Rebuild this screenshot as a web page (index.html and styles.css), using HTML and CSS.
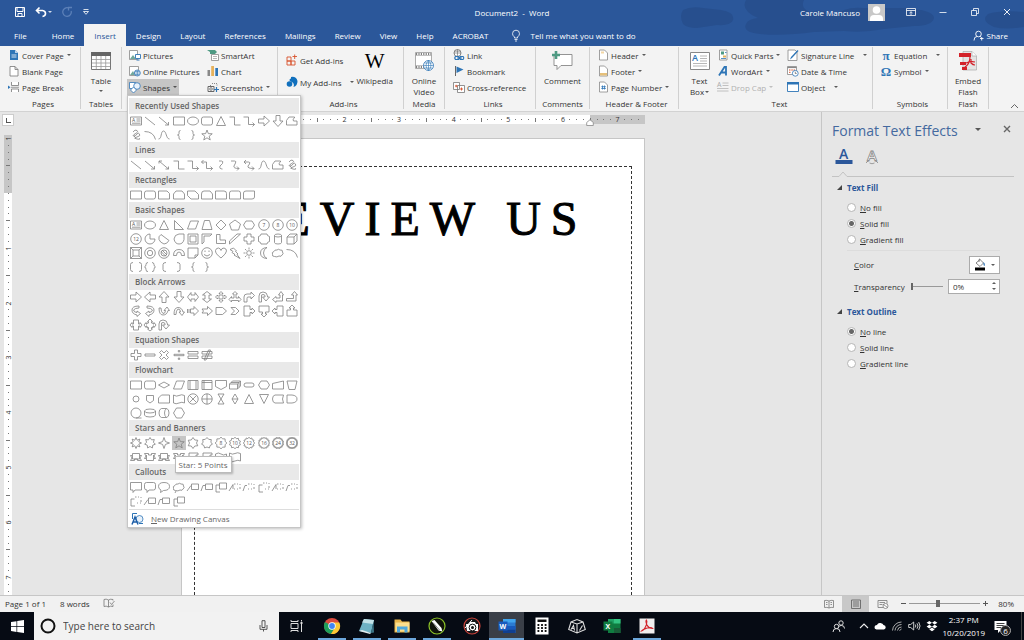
FILE: index.html
```html
<!DOCTYPE html>
<html lang="en">
<head>
    <meta charset="UTF-8">
    <meta name="viewport" content="width=device-width, initial-scale=1.0">
    <title>Document2 - Word</title>
    <link rel="stylesheet" href="styles.css">
</head>
<body>
    <header class="top">
        <svg class="clouds" width="344" height="45" viewBox="0 0 344 45">
            <path d="M3 10q8-4 20-2l18 2q14 2 12 10-2 6-16 5l-20 3q-10 0-14-4-4-8 0-14zM66 0h58q-4 8 6 12 14-4 26 4 8-10 28-8l40 0q30 2 30 10-2 8-20 8l-30 3q-20 4-40 2l-30 1q-30 4-54 2-18-2-14-10 2-5 12-6-18-8-12-18zM308 14q12-4 36-2v15q-18 3-30 0-14-6-6-13z"/>
        </svg>
        <div class="titlebar">
            <div class="quick">
                <button aria-label="Save"><svg width="12" height="12" viewBox="0 0 12 12"><path d="M1.5 1.5h9v9h-9zM3 1.5v4h6v-4M4 10.500v-3h4v3" fill="none" stroke="#fff"/></svg></button>
                <button class="undo" aria-label="Undo"><svg width="12" height="12" viewBox="0 0 12 12"><path d="M4.500 1.500L1.500 4.500l3 3M2 4.500h5.500q3 .5 3 3t-3 3" fill="none" stroke="#fff" stroke-width="1.600"/></svg><i class="caret"></i></button>
                <button aria-label="Redo"><svg width="12" height="12" viewBox="0 0 12 12"><path d="M7.500 2A4.300 4.300 0 1 0 10.200 5M7.500 4.500V1.500h3.500" fill="none" stroke="#5c80b8" stroke-width="1.300"/></svg></button>
                <button aria-label="Customize"><svg width="8" height="8" viewBox="0 0 8 8"><path d="M1.500 1.500h5M1.500 3.500h5L4 6.300z" fill="none" stroke="#fff" stroke-width=".8"/></svg></button>
            </div>
            <span class="doc-title">Document2&nbsp; -&nbsp; Word</span>
            <div class="account">
                <span>Carole Mancuso</span>
                <svg class="avatar" width="17" height="17" viewBox="0 0 17 17"><path fill="#c8c8c8" d="M0 0h17v17H0z"/><circle cx="8.500" cy="6" r="3.800" fill="#fff"/><path d="M2 17v-2q0-4 4-4h5q4 0 4 4v2z" fill="#fff"/></svg>
                <button aria-label="Ribbon display"><svg width="12" height="10" viewBox="0 0 12 10"><path d="M1.500 1.500h9v7h-9zM1.500 3.500h9M6 8V5M4.500 6L6 4.700 7.500 6" fill="none" stroke="#fff" stroke-width=".8"/></svg></button>
                <button aria-label="Minimize"><svg width="12" height="10" viewBox="0 0 12 10"><path d="M2.500 5.500h7" stroke="#fff" stroke-width=".8"/></svg></button>
                <button aria-label="Restore"><svg width="12" height="10" viewBox="0 0 12 10"><path d="M2.500 3.500h5v5h-5zM4.500 3.500v-2h5v5h-2" fill="none" stroke="#fff" stroke-width=".8"/></svg></button>
                <button aria-label="Close"><svg width="12" height="10" viewBox="0 0 12 10"><path d="M3 2l6 6M9 2L3 8" stroke="#fff" stroke-width=".9"/></svg></button>
            </div>
        </div>
        <nav class="tabs">
            <button class="tab file">File</button>
            <button class="tab">Home</button>
            <button class="tab active">Insert</button>
            <button class="tab">Design</button>
            <button class="tab">Layout</button>
            <button class="tab">References</button>
            <button class="tab">Mailings</button>
            <button class="tab">Review</button>
            <button class="tab">View</button>
            <button class="tab">Help</button>
            <button class="tab">ACROBAT</button>
            <button class="tell"><svg width="10" height="13" viewBox="0 0 10 13"><path d="M3.500 9V8Q1.500 6.500 1.500 4.700a3.500 3.500 0 0 1 7 0Q8.500 6.500 6.500 8v1zM3.500 10.500h3M4 12h2" fill="none" stroke="#fff" stroke-width=".8"/></svg>Tell me what you want to do</button>
            <button class="share"><svg width="11" height="11" viewBox="0 0 11 11"><circle cx="5.500" cy="4" r="2.800" fill="none" stroke="#fff" stroke-width=".9"/><path d="M1 10.500q0-4 3-4M7 8.500h3.500M8.700 7v3.500M7 6.400l1 .6" fill="none" stroke="#fff" stroke-width=".9"/></svg>Share</button>
        </nav>
    </header>

    <section class="ribbon">
        <div class="group pages">
            <div class="cmds">
                <div class="col">
                    <button class="cmd"><svg viewBox="0 0 12 12"><path d="M2 1h5l3 3v7H2z" fill="#2e75b6"/><path d="M7 1v3h3" fill="#b8d0e8"/><path d="M3.500 6h5M3.500 8h5" stroke="#fff" stroke-width=".8"/></svg>Cover Page<i class="caret"></i></button>
                    <button class="cmd"><svg viewBox="0 0 12 12"><path d="M2 1.500h5l3 3v6.500H2zM7 1.500v3h3" fill="#fff" stroke="#777" stroke-width=".8"/></svg>Blank Page</button>
                    <button class="cmd"><svg viewBox="0 0 12 12"><path d="M3.500 1v3.500h7V1M3.500 11V8h7v3" fill="#fff" stroke="#777" stroke-width=".8"/><path d="M3 6.300h8" stroke="#777" stroke-width=".7"/><path d="M0 4.500l2.500 1.800L0 8z" fill="#2e75b6"/></svg>Page Break</button>
                </div>
            </div>
            <div class="group-name">Pages</div>
        </div>
        <div class="group tables">
            <div class="cmds center">
                <button class="big"><svg viewBox="0 0 20 20"><path d="M.5 1.500h19v17H.5z" fill="#fff" stroke="#777"/><path d="M0 1h20v4H0z" fill="#666"/><path d="M1 8.500h18M1 12h18M1 15.500h18M5.300 5v13M10 5v13M14.700 5v13" stroke="#999" stroke-width=".8"/></svg>Table<span class="line2"><i class="caret"></i></span></button>
            </div>
            <div class="group-name">Tables</div>
        </div>
        <div class="group illustrations">
            <div class="cmds">
                <div class="col col-pictures">
                    <button class="cmd"><svg viewBox="0 0 12 12"><path d="M.5 1.500h8v9h-8z" fill="#fff" stroke="#888" stroke-width=".8"/><path d="M1 10l3-4 3 4z" fill="#70a89c"/><path d="M6.500 5.500h5v4h-5z" fill="#fff" stroke="#2e75b6" stroke-width=".9"/><path d="M7.500 11h3" stroke="#2e75b6"/></svg>Pictures</button>
                    <button class="cmd"><svg viewBox="0 0 12 12"><path d="M.5 1.500h9v9h-9z" fill="#fff" stroke="#888" stroke-width=".8"/><path d="M1 10l3-4 2 4z" fill="#70a89c"/><circle cx="8.300" cy="8" r="3" fill="#fff" stroke="#2e75b6" stroke-width=".8"/><path d="M5.300 8h6M8.300 5v6M6 6.500h4.500M6 9.500h4.500" stroke="#2e75b6" stroke-width=".6"/></svg>Online Pictures</button>
                    <div class="anchor">
                        <button class="cmd pressed"><svg viewBox="0 0 12 12"><path d="M.5 1.500h6v6h-6z" fill="#fff" stroke="#2e75b6" stroke-width=".8"/><circle cx="8" cy="5" r="3.300" fill="#e8f1fa" stroke="#2e75b6" stroke-width=".8"/><path d="M4.500 6l3 3-3 3-3-3z" fill="#fff" stroke="#2e75b6" stroke-width=".8"/></svg>Shapes<i class="caret"></i></button>
                        <div class="menu">
                            <div id="gallery"></div>
                            <button class="canvas-item"><svg width="13" height="13" viewBox="0 0 13 13"><path d="M1.500 7V1.500H6M4 5.500h6" fill="none" stroke="#2e75b6"/><circle cx="8.500" cy="7" r="3.500" fill="#e8f1fa" stroke="#2e75b6" stroke-width=".8"/><path d="M1 12.500L4 5l3 7.500M2.200 10h3.800" fill="none" stroke="#1f5fa8" stroke-width="1.500"/><path d="M8 11.500h4" stroke="#2e75b6"/></svg><span><u>N</u>ew Drawing Canvas</span></button>
                        </div>
                    </div>
                </div>
                <div class="col">
                    <button class="cmd"><svg viewBox="0 0 12 12"><path d="M0 1h8l2 2-2 2H3V3z" fill="#4e9a83"/><path d="M4.500 5.500h7v6h-7z" fill="#fff" stroke="#888" stroke-width=".8"/><path d="M6 7.500h4M6 9.500h4" stroke="#888" stroke-width=".6"/></svg>SmartArt</button>
                    <button class="cmd"><svg viewBox="0 0 12 12"><path d="M.5 5H3v6H.5z" fill="#888"/><path d="M4.200 1h2.800v10H4.200z" fill="#e6b25c"/><path d="M8.300 3H11v8H8.300z" fill="#2e75b6"/></svg>Chart</button>
                    <button class="cmd"><svg viewBox="0 0 12 12"><path d="M1 5.500h6v5H1z" fill="none" stroke="#666"/><circle cx="4" cy="8" r="1.300" fill="none" stroke="#666" stroke-width=".8"/><path d="M3 4.500h2M5 2.500h5v2" stroke="#888" fill="none" stroke-dasharray="1 1"/><path d="M9.500 6v5M7 8.500h5" stroke="#2e75b6" stroke-width="1.200"/></svg>Screenshot<i class="caret"></i></button>
                </div>
            </div>
        </div>
        <div class="group addins">
            <div class="cmds">
                <div class="col col-addins">
                    <button class="cmd"><svg viewBox="0 0 12 12"><path d="M1 3h4v4H1zM1 7h4v4H1zM5 7h4v4H5zM6.500 2.500H11M8.700.5v4.500" fill="none" stroke="#d8512a" stroke-width=".9"/></svg>Get Add-ins</button>
                    <button class="cmd"><svg viewBox="0 0 12 12"><path d="M5 1q5-1 6.500 4 0 5-4 6Q9 7 5 5.500z" fill="#1170bd"/><circle cx="3.500" cy="8" r="2.800" fill="#1170bd"/><circle cx="5" cy="4" r="1.500" fill="#1170bd"/></svg>My Add-ins<i class="caret wide"></i></button>
                </div>
                <button class="big"><span class="wiki">W</span>Wikipedia</button>
            </div>
            <div class="group-name">Add-ins</div>
        </div>
        <div class="group media">
            <div class="cmds center">
                <button class="big"><svg viewBox="0 0 20 20"><path d="M1.500 1.500h16v16h-16z" fill="#fff" stroke="#999" stroke-width=".8"/><path d="M2 3h15M2 16h8" stroke="#555" stroke-width="1.500" stroke-dasharray="1.200 1.200"/><path d="M1.500 4.500h16M1.500 14.500h9" stroke="#999" stroke-width=".6"/><circle cx="14.500" cy="14.500" r="5" fill="#fff" stroke="#2e75b6" stroke-width=".8"/><path d="M9.500 14.500h10M14.500 9.500v10M10.500 12h8M10.500 17h8M14.500 9.500q-5 5 0 10 5-5 0-10" fill="none" stroke="#2e75b6" stroke-width=".6"/></svg>Online<span class="line2">Video</span></button>
            </div>
            <div class="group-name">Media</div>
        </div>
        <div class="group links">
            <div class="cmds">
                <div class="col">
                    <button class="cmd"><svg viewBox="0 0 12 12"><circle cx="4.500" cy="4" r="3.500" fill="#fff" stroke="#666" stroke-width=".8"/><path d="M1 4h7M4.500.5v7M1.700 2.200h5.600" stroke="#666" stroke-width=".6"/><path d="M2.500 7.500h3q1.500 1.500 0 3h-3q-1.500-1.500 0-3zM7.500 7.500h2.500q1.500 1.500 0 3H7.500q-1.500-1.500 0-3zM4 9h5" fill="none" stroke="#2e75b6" stroke-width="1.100"/></svg>Link</button>
                    <button class="cmd"><svg viewBox="0 0 12 12"><path d="M2.500 1v10" stroke="#666"/><path d="M3.500 1.500l7 3-7 3.500z" fill="#2e75b6"/></svg>Bookmark</button>
                    <button class="cmd"><svg viewBox="0 0 12 12"><path d="M.5 1.500h6v7h-6zM4.500 4.500h7v7h-7z" fill="#fff" stroke="#777" stroke-width=".8"/><path d="M2 5h2.500M3.200 3.800v2.500M7 8h3M8.500 6.500v3" stroke="#d8512a" stroke-width=".9"/></svg>Cross-reference</button>
                </div>
            </div>
            <div class="group-name">Links</div>
        </div>
        <div class="group comments">
            <div class="cmds center">
                <button class="big"><svg viewBox="0 0 20 20"><path d="M2 3.500h18v11h-11l-4 4v-4H2z" fill="#fff" stroke="#888" stroke-width=".9"/><path d="M4 0v8M0 4h8" stroke="#4e9a83" stroke-width="2.600"/></svg>Comment</button>
            </div>
            <div class="group-name">Comments</div>
        </div>
        <div class="group headfoot">
            <div class="cmds">
                <div class="col">
                    <button class="cmd"><svg viewBox="0 0 12 12"><path d="M2.500 1h5l3 3v7h-8z" fill="#fff" stroke="#888" stroke-width=".8"/><path d="M4 2.500h3v2H4z" fill="#f3d7a5"/></svg>Header<i class="caret"></i></button>
                    <button class="cmd"><svg viewBox="0 0 12 12"><path d="M2.500 1h5l3 3v7h-8z" fill="#fff" stroke="#888" stroke-width=".8"/><path d="M3 8h7v2.500H3z" fill="#e6c07a"/></svg>Footer<i class="caret"></i></button>
                    <button class="cmd"><svg viewBox="0 0 12 12"><path d="M2.500 1h5l3 3v7h-8z" fill="#fff" stroke="#888" stroke-width=".8"/><path d="M5.500 4.500v4M7.500 4.500v4M4.300 5.700h4.500M4.300 7.500h4.500" stroke="#2e75b6" stroke-width=".8"/></svg>Page Number<i class="caret"></i></button>
                </div>
            </div>
            <div class="group-name">Header &amp; Footer</div>
        </div>
        <div class="group text">
            <div class="cmds">
                <button class="big textbox"><svg viewBox="0 0 20 20"><path d="M.5 1.500h19v17H.5z" fill="#fff" stroke="#888"/><text x="2" y="10" font-size="9" font-weight="600" fill="#2e75b6">A</text><path d="M10 5h7M10 7.500h7M10 10h7M3 12.500h14M3 15h14" stroke="#999" stroke-width=".7"/></svg>Text<span class="line2">Box<i class="caret"></i></span></button>
                <div class="col col-parts">
                    <button class="cmd"><svg viewBox="0 0 12 12"><path d="M2.500 1h7.500v10H2.500z" fill="#fff" stroke="#888" stroke-width=".8"/><path d="M4 2.500h3v3H4z" fill="#4e9a83"/><path d="M6 6.500h3v2H6z" fill="#e6b25c"/><path d="M4 9.500h5M8 3.500h1.500" stroke="#2e75b6" stroke-width=".8"/></svg>Quick Parts<i class="caret"></i></button>
                    <button class="cmd"><svg viewBox="0 0 12 12"><path d="M2 10.500L7.500 2h1.500v8.500M4 7.500h5" fill="none" stroke="#2e75b6" stroke-width="1.800"/></svg>WordArt<i class="caret"></i></button>
                    <button class="cmd" disabled><svg viewBox="0 0 12 12"><text x="0" y="6" font-size="7" fill="#aaa">A</text><path d="M5.500 2h6M5.500 4.500h6M0 7.500h11.500M0 10h11.500" stroke="#bbb" stroke-width=".9"/></svg>Drop Cap<i class="caret"></i></button>
                </div>
                <div class="col">
                    <button class="cmd"><svg viewBox="0 0 12 12"><path d="M1 1h7l2 2v8.500H1z" fill="#fff" stroke="#888" stroke-width=".8"/><path d="M11.500 2L5 9l-2 1.500L4 8l6.500-7z" fill="#2e75b6"/></svg>Signature Line<i class="caret wide"></i></button>
                    <button class="cmd"><svg viewBox="0 0 12 12"><path d="M.5 1.500h9v8h-9z" fill="#fff" stroke="#888" stroke-width=".8"/><path d="M.5 2.500h9" stroke="#888" stroke-width="1.200"/><path d="M2 5h1.500M4.300 5h1.500M6.600 5H8M2 7.300h1.500" stroke="#d8512a"/><circle cx="8.300" cy="8.300" r="2.900" fill="#fff" stroke="#2e75b6" stroke-width=".8"/><path d="M8.300 6.700v1.800h1.300" fill="none" stroke="#555" stroke-width=".7"/></svg>Date &amp; Time</button>
                    <button class="cmd"><svg viewBox="0 0 12 12"><path d="M.5 1.500h11v9H.5z" fill="#fff" stroke="#2e75b6" stroke-width=".9"/><path d="M0 1h12v2.500H0z" fill="#2e75b6"/></svg>Object<i class="caret wide"></i></button>
                </div>
            </div>
            <div class="group-name">Text</div>
        </div>
        <div class="group symbols">
            <div class="cmds">
                <div class="col">
                    <button class="cmd"><b class="sym">π</b>Equation<i class="caret wide"></i></button>
                    <button class="cmd"><b class="sym">Ω</b>Symbol<i class="caret"></i></button>
                </div>
            </div>
            <div class="group-name">Symbols</div>
        </div>
        <div class="group flash">
            <div class="cmds center">
                <button class="big"><svg viewBox="0 0 20 20"><path d="M5 .5h9l4.500 4.500v14H5z" fill="#e4e4e4" stroke="#aaa" stroke-width=".7"/><path d="M14 .5V5h4.500" fill="#fff" stroke="#aaa" stroke-width=".7"/><path d="M1 2h12v4H1z" fill="#d3222a"/><path d="M2 11h6v3H2zM4 16h5v3H4z" fill="#d3222a"/><path d="M6 17q6-4 6-11M8 12q5-2 9-1M13 8v4q2 2 4 2" stroke="#d3222a" stroke-width="1.200" fill="none"/></svg>Embed<span class="line2">Flash</span></button>
            </div>
            <div class="group-name">Flash</div>
        </div>
        <button class="collapse" aria-label="Collapse the ribbon"><svg width="9" height="6" viewBox="0 0 9 6"><path d="M1 5l3.500-3.500L8 5" fill="none" stroke="#666"/></svg></button>
    </section>

    <main class="workspace">
        <aside class="left-ruler">
            <button class="tab-stop" aria-label="Tab stop"></button>
            <div class="vruler" id="vruler"></div>
        </aside>
        <div class="doc">
            <div class="hruler"><div class="ruler-cells" id="hruler"></div><svg class="indent" width="8" height="7" viewBox="0 0 8 7"><path d="M4 .7L7.300 3.500v3H.7v-3z" fill="#fff" stroke="#888" stroke-width=".8"/></svg></div>
            <article class="sheet">
                <div class="frame">
                    <h1>REVIEW US</h1>
                </div>
            </article>
        </div>
        <aside class="pane">
            <div class="pane-head">
                <h2>Format Text Effects</h2>
                <button aria-label="Pane options"><i class="caret large"></i></button>
                <button aria-label="Close pane"><svg width="8" height="8" viewBox="0 0 8 8"><path d="M1 1l6 6M7 1L1 7" stroke="#666" stroke-width="1.400"/></svg></button>
            </div>
            <div class="pane-tabs">
                <button aria-label="Text fill and outline"><svg width="18" height="18" viewBox="0 0 18 18"><text x="4" y="11.500" font-size="14" font-weight="600" fill="#2b579a">A</text><path d="M.5 13h17v4H.5z" fill="#2b579a"/></svg></button>
                <button aria-label="Text effects"><svg width="14" height="18" viewBox="0 0 14 18"><text x="2" y="13.500" font-size="15" font-weight="600" fill="#fff" stroke="#888" stroke-width=".8">A</text><path d="M1 16l3-3M13 16l-3-3M4.500 16q2.500 1.500 5 0" stroke="#888" stroke-width=".8" fill="none"/></svg></button>
            </div>
            <svg class="notch" viewBox="0 0 182 6" preserveAspectRatio="xMinYMin slice"><path d="M0 5.500h7l4-4.500 4 4.500h400" fill="none" stroke="#c3c3c3"/></svg>
            <section class="options">
                <h3>Text Fill</h3>
                <label><input type="radio" name="fill"><span><u>N</u>o fill</span></label>
                <label><input type="radio" name="fill" checked><span><u>S</u>olid fill</span></label>
                <label><input type="radio" name="fill"><span><u>G</u>radient fill</span></label>
                <div class="field">
                    <label for="color"><u>C</u>olor</label>
                    <button class="color" id="color"><svg width="12" height="13" viewBox="0 0 12 13"><path d="M2 5l4-3.500 3.500 3.500L6 8.500zM5 4V1.500q1-1 1.500 0" fill="#fff" stroke="#666" stroke-width=".8"/><path d="M9.500 4q2 1.500 1.200 4Q9 8 9.500 4z" fill="#2e75b6"/><path d="M1 9.500h10v3H1z"/></svg><i class="caret"></i></button>
                </div>
                <div class="field">
                    <label for="transparency"><u>T</u>ransparency</label>
                    <input type="range" id="transparency" min="0" max="100" value="0">
                    <div class="spin">
                        <input type="text" value="0%" aria-label="Transparency percent">
                        <div class="spin-buttons">
                            <button aria-label="Increase"><i class="caret up"></i></button>
                            <button aria-label="Decrease"><i class="caret"></i></button>
                        </div>
                    </div>
                </div>
            </section>
            <section class="options">
                <h3>Text Outline</h3>
                <label><input type="radio" name="outline" checked><span><u>N</u>o line</span></label>
                <label><input type="radio" name="outline"><span><u>S</u>olid line</span></label>
                <label><input type="radio" name="outline"><span><u>G</u>radient line</span></label>
            </section>
        </aside>
    </main>

    <footer class="status">
        <span>Page 1 of 1</span>
        <span>8 words</span>
        <svg width="12" height="10" viewBox="0 0 12 10"><path d="M5.500 2v7M5.500 2Q3 .5 1 1.500v7q2-1 4.500.5 2-1.500 4.500-.5V6.500M5.500 2Q7.500.7 10 1.500v1M7 4.500l1.500 2L11.500 3" fill="none" stroke="#777" stroke-width=".8"/></svg>
        <div class="views">
            <button aria-label="Read mode"><svg width="12" height="10" viewBox="0 0 12 10"><path d="M6 2v7M6 2Q4 1 1.500 1.500v7Q4 8 6 9q2-1 4.500-.5v-7Q8 1 6 2M3 3.500h1.500M3 5.500h1.500M7.500 3.500H9M7.500 5.500H9" fill="none" stroke="#777" stroke-width=".8"/></svg></button>
            <button class="on" aria-label="Print layout"><svg width="12" height="10" viewBox="0 0 12 10"><path d="M1.500 1h9v8.500h-9zM3 3h6M3 5h6M3 7h6" fill="none" stroke="#666" stroke-width=".9"/></svg></button>
            <button aria-label="Web layout"><svg width="12" height="10" viewBox="0 0 12 10"><path d="M6 8.500H1v-7h9v3M2.500 3.500H8M2.500 5.500h3" fill="none" stroke="#777" stroke-width=".8"/><circle cx="8.500" cy="7" r="2.500" fill="#fff" stroke="#777" stroke-width=".8"/><path d="M6.500 5.500l4 3" stroke="#777" stroke-width=".8"/></svg></button>
        </div>
        <button class="zoom-step" aria-label="Zoom out"><svg width="7" height="7" viewBox="0 0 7 7"><path d="M1 3.500h5" stroke="#555"/></svg></button>
        <input type="range" class="zoom" min="0" max="200" value="80" aria-label="Zoom">
        <button class="zoom-step" aria-label="Zoom in"><svg width="7" height="7" viewBox="0 0 7 7"><path d="M1 3.500h5M3.500 1v5" stroke="#555"/></svg></button>
        <span class="percent">80%</span>
    </footer>

    <footer class="taskbar">
        <button class="start" aria-label="Start"><svg width="13" height="13" viewBox="0 0 13 13"><path d="M0 2l5.500-.8v5H0zM6.200 1.100L13 0v6.200H6.200zM0 6.900h5.500v5L0 11.100zM6.200 6.900H13V13l-6.800-1z" fill="#fff"/></svg></button>
        <div class="search">
            <svg width="16" height="16" viewBox="0 0 16 16"><circle cx="8" cy="8" r="6.500" fill="none" stroke="#111" stroke-width="2"/></svg>
            <input type="text" placeholder="Type here to search" aria-label="Search">
            <svg width="9" height="12" viewBox="0 0 9 12"><path d="M3 .7h3v6.800H3zM1 5v4.300h7V5M4.500 9.300v2.200" fill="none" stroke="#444" stroke-width=".9"/></svg>
        </div>
        <div class="apps">
            <button aria-label="Task view"><svg viewBox="0 0 18 18"><path d="M3 3v1.500h7V3M3 15v-1.500h7V15M3 6.500h7v5H3zM13.500 3v1.500M13.500 7v8" fill="none" stroke="#ddd"/><path d="M12.500 5h2v2h-2z" fill="#ddd"/></svg></button>
            <button class="running" aria-label="Chrome"><svg viewBox="0 0 18 18"><circle cx="9" cy="9" r="8" fill="#dd4b3e"/><path d="M9 9L2 5a8 8 0 0 0 6 12l4.500-6.500z" fill="#1fa05a"/><path d="M9 5.500h7.200A8 8 0 0 1 8 17l4-6.500z" fill="#fcc934"/><circle cx="9" cy="9" r="3.700" fill="#fff"/><circle cx="9" cy="9" r="2.900" fill="#4285f4"/></svg></button>
            <button class="running" aria-label="Notepad"><svg viewBox="0 0 18 18"><path d="M6 2l10 1-3 13L1 14z" fill="#6fb2c4"/><path d="M6 2l10 1-1 4L4 5.500z" fill="#c3e2e8"/><path d="M1 14l3-1 9 3-1 1z" fill="#e4eef0"/><path d="M15.500 4L13 16l3-.5z" fill="#3c7486"/></svg></button>
            <button class="running" aria-label="File Explorer"><svg viewBox="0 0 18 18"><path d="M1.500 2.500h6l1.500 2h7.500v11h-15z" fill="#e8b64a"/><path d="M2.500 5.500h14v9h-14z" fill="#fbdf8d"/><path d="M4 15.500v-6h10.500v6h-3v-3H7v3z" fill="#4ea8dc"/></svg></button>
            <button class="running" aria-label="Pen"><svg viewBox="0 0 18 18"><circle cx="9" cy="9" r="8" fill="#10130a" stroke="#8cc228" stroke-width="1.200"/><path d="M3.500 4l3-1 7 8 .8 3.500-3.800-1z" fill="#fff"/><path d="M5 5.500L11.500 13" stroke="#333" stroke-width=".6"/></svg></button>
            <button aria-label="Camera"><svg viewBox="0 0 18 18"><circle cx="9" cy="9" r="8" fill="#15171a" stroke="#c9423a" stroke-width="1.200"/><path d="M3 7h3l1-2h5l1 2h2v7H4z" fill="#fff"/><circle cx="9.500" cy="10.500" r="3.400" fill="#fff" stroke="#111"/><circle cx="9.500" cy="10.500" r="1.500" fill="#111"/><path d="M2 11L9 3" stroke="#fff"/></svg></button>
            <button class="running current" aria-label="Word"><svg viewBox="0 0 18 18"><path d="M5 2h12.500v14H5z" fill="#2b7cd3"/><path d="M5 2h12.500v3.500H5z" fill="#41a5ee"/><path d="M5 9h12.500v3.500H5z" fill="#185abd"/><path d="M5 12.500h12.500V16H5z" fill="#103f91"/><path d="M.5 4.500h9v9h-9z" fill="#185abd"/><text x="1.500" y="11.500" font-size="7" font-weight="700" fill="#fff">W</text></svg></button>
            <button aria-label="Calculator"><svg viewBox="0 0 18 18"><path d="M2.500.5h13v17h-13z" fill="#fff"/><path d="M4.500 2.500h9v2.500h-9z" fill="#111"/><path d="M4.500 8h9M4.500 11h9M4.500 14h9" stroke="#111" stroke-width="1.800" stroke-dasharray="1.800 1.800"/></svg></button>
            <button aria-label="Cricut"><svg viewBox="0 0 18 18"><path d="M.7 12.500L3 5l6-2.500L15 5l2.300 7.500L9 16zM3 5l6 2 6-2M9 7v9M3 12.500l2.500-4 1 5M4 11.500h2M11.500 13.500l3-5" fill="none" stroke="#ddd" stroke-width="1.100"/></svg></button>
            <button aria-label="Excel"><svg viewBox="0 0 18 18"><path d="M5 2h12.500v14H5z" fill="#107c41"/><path d="M11 2h6.500v4.500H11z" fill="#33c481"/><path d="M5 2h6v4.500H5z" fill="#21a366"/><path d="M11 11h6.500v5H11z" fill="#185c37"/><path d="M.5 4.500h9v9h-9z" fill="#107c41"/><text x="2.500" y="11.500" font-size="7" font-weight="700" fill="#fff">X</text></svg></button>
            <button class="running" aria-label="Acrobat"><svg viewBox="0 0 18 18"><path d="M1.500 1.500h15v15h-15z" fill="#f0eeee"/><path d="M3.500 14q3-1 5-6.500.8-3.500 0-4.500-1.200 1 .2 4.500 2 4 6 4-1.200-1.500-5.500-.5Q4.500 12.500 3.500 14z" fill="none" stroke="#d3222a" stroke-width="1.100"/></svg></button>
        </div>
        <div class="tray">
            <svg class="people" width="13" height="13" viewBox="0 0 13 13"><circle cx="9" cy="3" r="2.200" fill="none" stroke="#ddd"/><circle cx="4.500" cy="6.500" r="2.200" fill="none" stroke="#ddd"/><path d="M1 12q0-3.500 3.500-3.500T8 12M6 7.500q2-2.500 3.500-2 3 0 3 3" fill="none" stroke="#ddd"/></svg>
            <svg width="10" height="12" viewBox="0 0 10 12"><path d="M1 8l4-4 4 4" fill="none" stroke="#eee" stroke-width="1.100"/></svg>
            <svg width="12" height="12" viewBox="0 0 12 12"><path d="M2.500 9.500Q.3 9 .5 7t2.500-2q1-2.500 3.500-2T9.500 5q2.300.3 2.200 2.500-.2 1.700-1.700 2z" fill="#fff"/></svg>
            <svg width="12" height="12" viewBox="0 0 12 12"><path d="M1.500 10.500A9 9 0 0 1 10.500 2M4 10.500a6.500 6.500 0 0 1 6.500-6M6.500 10.500a4 4 0 0 1 4-3.500M8.500 10.500l2-1.500" fill="none" stroke="#bbb" stroke-width=".9"/></svg>
            <svg width="13" height="12" viewBox="0 0 13 12"><path d="M.7 4.500h2l3-2.500v8l-3-2.500h-2zM7.300 4.500q1 1.500 0 3M9 3.300q2 2.700 0 5.400M10.700 2q2.700 4 0 8" fill="none" stroke="#ddd" stroke-width=".9"/></svg>
            <svg width="12" height="12" viewBox="0 0 12 12"><path d="M3.300 1L6 2.800 3.300 4.600.6 2.800zM8.700 1l2.700 1.800-2.700 1.800L6 2.800zM3.300 4.800L6 6.600 3.300 8.400.6 6.600zM8.700 4.800l2.700 1.800-2.700 1.800L6 6.600zM6 7.600l2.700 1.800L6 11.200 3.300 9.400z" fill="#fff"/></svg>
            <div class="clock">2:37 PM<br>10/20/2019</div>
            <button class="notify" aria-label="Notifications"><svg width="13" height="13" viewBox="0 0 13 13"><path d="M.5 1h12v9H7l-3 3v-3H.5z" fill="#fff"/><path d="M2.500 3.500h8M2.500 5.500h8M2.500 7.500h5" stroke="#111" stroke-width=".8"/></svg><span class="badge">6</span></button>
        </div>
    </footer>
    <script src="shapes.js"></script>
</body>
</html>
```

FILE: styles.css
```css
* {
    box-sizing: border-box;
}
body {
    margin: 0;
    height: 100vh;
    display: flex;
    flex-direction: column;
    overflow: hidden;
    font-family: "Open Sans", "Noto Sans", sans-serif;
    font-size: 8px;
    line-height: 11px;
    color: #333;
    background-color: #e6e6e6;
}
button, input {
    font: inherit;
    color: inherit;
    background: none;
    border: 0;
    margin: 0;
    padding: 0;
}
button {
    display: flex;
    align-items: center;
    white-space: nowrap;
}
svg {
    display: block;
    flex: none;
    overflow: visible;
}
.caret {
    width: 0;
    height: 0;
    border: 2px solid transparent;
    border-top-color: currentColor;
    border-bottom: 0;
    margin-left: 1px;
    opacity: 0.8;
}
.caret.wide {
    margin-left: 7px;
}
.caret.large {
    border-width: 3px 3px 0;
    margin: 0;
}
.caret.up {
    border-bottom: 2px solid;
    border-top: 0;
}

/* title bar and tabs */
.top {
    position: relative;
    flex: none;
    background-color: #2b579a;
    color: #fff;
}
.clouds {
    position: absolute;
    top: 0;
    right: 0;
    fill: #274f8e;
}
.titlebar {
    position: relative;
    display: grid;
    grid-template-columns: 1fr auto 1fr;
    align-items: center;
    height: 24px;
}
.quick {
    display: flex;
    align-items: center;
    padding-left: 14px;
    gap: 9px;
}
.account {
    display: flex;
    align-items: center;
    justify-content: flex-end;
    padding-right: 11px;
    gap: 20px;
}
.avatar {
    margin-left: -12px;
}
.tabs {
    position: relative;
    display: flex;
    gap: 1px;
    height: 22px;
}
.tab {
    padding: 0 9px;
}
.tab.file {
    padding: 0 15px 0 14px;
}
.tab.active {
    padding: 0 10px;
    background-color: #f3f3f3;
    color: #2b579a;
}
.tell {
    gap: 9px;
    padding-left: 13px;
}
.share {
    margin-left: auto;
    padding-right: 16px;
    gap: 3px;
}

/* ribbon */
.ribbon {
    position: relative;
    z-index: 2;
    display: flex;
    flex: none;
    height: 66px;
    padding-top: 1px;
    background-color: #f3f3f3;
    border-bottom: 1px solid #d2d2d2;
}
.group {
    display: flex;
    flex-direction: column;
    flex: none;
    border-right: 1px solid #d0d0d0;
    margin-bottom: 2px;
}
.cmds {
    display: flex;
    flex: none;
    height: 48px;
}
.cmds.center {
    justify-content: center;
}
.group-name {
    margin-top: 3px;
    text-align: center;
}
.pages {
    width: 81px;
    padding-left: 6px;
}
.tables {
    width: 41px;
}
.illustrations {
    width: 156px;
    padding-left: 5px;
}
.addins {
    width: 126px;
    padding-left: 6px;
}
.media {
    width: 41px;
}
.links {
    width: 91px;
    padding-left: 6px;
}
.comments {
    width: 54px;
}
.headfoot {
    width: 89px;
    padding-left: 5px;
}
.text {
    width: 194px;
    padding-left: 8px;
}
.symbols {
    width: 75px;
    padding-left: 5px;
}
.flash {
    width: 41px;
}
.cmd {
    height: 16px;
    gap: 2px;
    padding: 0 2px;
}
.cmd svg {
    width: 12px;
    height: 12px;
}
.cmd:disabled {
    color: #b1b1b1;
}
.cmd.pressed {
    background-color: #c5c5c5;
}
.col-pictures {
    width: 78px;
}
.col-addins {
    display: flex;
    flex-direction: column;
    gap: 6px;
    padding-top: 5px;
}
.col-parts {
    width: 70px;
    margin-left: 3px;
}
.big {
    flex-direction: column;
    justify-content: flex-start;
}
.big svg {
    width: 20px;
    height: 20px;
    margin: 4px 0;
}
.line2 {
    display: flex;
    align-items: center;
    height: 11px;
}
.textbox {
    width: 25px;
}
.wiki {
    height: 28px;
    font-family: "Liberation Serif", serif;
    font-size: 21px;
    line-height: 28px;
    color: #000;
}
.sym {
    width: 12px;
    font-family: "Liberation Serif", serif;
    font-size: 13px;
    color: #2e75b6;
}
.collapse {
    margin: auto 5px 2px auto;
}

/* shapes menu */
.anchor {
    position: relative;
}
.menu {
    position: absolute;
    top: 100%;
    left: 0;
    width: 174px;
    padding: 2px 1px 0;
    background-color: #fff;
    border: 1px solid #c6c6c6;
    box-shadow: 1px 1px 3px rgba(0, 0, 0, 0.25);
}
.menu h4 {
    margin: 0;
    padding-left: 6px;
    font-size: 8px;
    font-weight: 600;
    line-height: 16px;
    color: #666;
    background-color: #e9e9e9;
}
.shapes {
    display: grid;
    grid-template-columns: repeat(12, 1fr);
}
.shape {
    position: relative;
    height: 14px;
    justify-content: center;
}
.shape svg {
    width: 14px;
    height: 14px;
    fill: none;
    stroke: #808080;
    stroke-width: 0.8;
}
.shape text {
    font-size: 5px;
    fill: #555;
    stroke: none;
    text-anchor: middle;
}
.shape.hot {
    background-color: #c5c5c5;
}
.tooltip {
    position: absolute;
    top: 20px;
    left: 3px;
    z-index: 1;
    padding: 2px 3px;
    background-color: #fff;
    border: 1px solid #bbb;
    box-shadow: 1px 1px 2px rgba(0, 0, 0, 0.25);
    color: #666;
    white-space: nowrap;
}
.canvas-item {
    width: 100%;
    height: 18px;
    padding-left: 2px;
    gap: 7px;
    margin-top: 1px;
    border-top: 1px solid #ddd;
    color: #666;
}

/* document area */
.workspace {
    flex: 1;
    min-height: 0;
    display: grid;
    grid-template-columns: 16px 1fr 203px;
}
.left-ruler {
    display: flex;
    flex-direction: column;
    align-items: center;
    min-height: 0;
}
.tab-stop {
    flex: none;
    width: 12px;
    height: 12px;
    margin: 2px 0 9px;
    background-color: #fff;
    border: 1px solid #ccc;
}
.tab-stop::before {
    content: "";
    width: 4px;
    height: 4px;
    margin: 0 auto;
    border-left: 1px solid #555;
    border-bottom: 1px solid #555;
}
.vruler {
    flex: 1;
    width: 8px;
    display: flex;
    flex-direction: column;
    min-height: 0;
    background: linear-gradient(#c6c6c6 58px, #fff 58px);
}
.hruler {
    position: relative;
    width: 464px;
    height: 9px;
    margin: 3px auto 14px;
    background: linear-gradient(90deg, #c6c6c6 55px, #fff 55px, #fff 409px, #c6c6c6 409px);
}
.ruler-cells {
    display: flex;
    height: 100%;
    padding: 0 3px;
}
.tick {
    flex: 1;
    min-width: 0;
    min-height: 0;
    display: flex;
    align-items: center;
    justify-content: center;
    font-size: 7px;
    line-height: 7px;
}
.tick::before {
    content: "";
    width: 1px;
    height: 1px;
    background-color: #777;
}
.tick.half::before {
    height: 4px;
}
.vruler .tick.half::before {
    width: 4px;
    height: 1px;
}
.tick.number::before {
    display: none;
}
.vruler .tick span {
    transform: rotate(-90deg);
}
.indent {
    position: absolute;
    left: 405px;
    top: 4px;
}
.doc {
    display: flex;
    flex-direction: column;
    align-items: center;
    min-width: 0;
    min-height: 0;
    overflow: hidden;
    padding-right: 11px;
}
.sheet {
    flex: 1;
    width: 464px;
    padding: 27px 12px 0;
    background-color: #fff;
    border: 1px solid #c6c6c6;
    border-bottom: 0;
}
.frame {
    height: 100%;
    padding-top: 20px;
    border: 1px dashed #333;
    border-bottom: 0;
}
h1 {
    margin: 0;
    font-family: "Liberation Serif", serif;
    font-size: 48px;
    font-weight: 400;
    line-height: 64px;
    letter-spacing: 10px;
    text-align: center;
    white-space: nowrap;
    color: #000;
    -webkit-text-stroke: 1px #000;
}

/* format pane */
.pane {
    padding: 9px 10px;
    border-left: 1px solid #c6c6c6;
}
.pane-head {
    display: flex;
    align-items: center;
}
.pane-head h2 {
    flex: 1;
    margin: 0;
    font-size: 14px;
    font-weight: 400;
    line-height: 20px;
    color: #44699f;
}
.pane-head button:last-child {
    margin: 0 3px 4px 22px;
}
.pane-head button {
    margin-bottom: 4px;
}
.pane-tabs {
    display: flex;
    gap: 12px;
    padding: 6px 0 6px 3px;
}
.notch {
    width: 100%;
    height: 6px;
    overflow: hidden;
}
.options {
    padding: 3px 14px 0 15px;
}
.options h3 {
    position: relative;
    margin: 0 0 3px;
    font-size: 8px;
    font-weight: 700;
    line-height: 16px;
    color: #2b579a;
}
.options h3::before {
    content: "";
    position: absolute;
    left: -10px;
    top: 5px;
    border-left: 5px solid transparent;
    border-bottom: 5px solid #444;
}
.options > label {
    display: flex;
    align-items: center;
    gap: 4px;
    height: 16px;
}
input[type="radio"] {
    appearance: none;
    width: 9px;
    height: 9px;
    border: 1px solid #b5b5b5;
    border-radius: 50%;
    background-color: #fff;
}
input[type="radio"]:checked {
    background-image: radial-gradient(#666 2px, transparent 3px);
}
.field {
    display: flex;
    align-items: center;
    justify-content: space-between;
    height: 22px;
    padding-left: 7px;
}
label + .field {
    height: 28px;
    margin-top: 3px;
    border-top: 1px solid #dcdcdc;
}
.color {
    width: 31px;
    height: 18px;
    justify-content: center;
    gap: 4px;
    background-color: #fff;
    border: 1px solid #ababab;
}
.field + .field {
    height: 16px;
}
input[type="range"] {
    appearance: none;
    height: 8px;
    background: linear-gradient(#999, #999) center / 100% 1px no-repeat;
}
input[type="range"]::-webkit-slider-thumb {
    appearance: none;
    width: 2px;
    height: 7px;
    background-color: #666;
}
#transparency {
    width: 32px;
    margin-left: 2px;
}
.spin {
    display: flex;
    width: 52px;
    height: 15px;
    background-color: #fff;
    border: 1px solid #ababab;
}
.spin input {
    flex: 1;
    min-width: 0;
    padding-left: 4px;
}
.spin-buttons {
    display: flex;
    flex-direction: column;
    justify-content: space-around;
    padding-right: 3px;
}
.options + .options {
    padding-top: 10px;
}

/* status bar */
.status {
    display: flex;
    flex: none;
    align-items: center;
    height: 17px;
    padding: 0 10px 2px 5px;
    background-color: #f1f1f1;
    border-top: 1px solid #c6c6c6;
}
.status span + span {
    margin: 0 13px 0 14px;
}
.views {
    display: flex;
    height: 16px;
    margin: 0 0 -2px auto;
}
.views button {
    width: 27px;
    justify-content: center;
}
.views .on {
    background-color: #c8c8c8;
}
.zoom-step {
    margin: 0 2px;
}
.views + .zoom-step {
    margin-left: 4px;
}
.zoom {
    width: 71px;
}
.zoom::-webkit-slider-thumb {
    width: 4px !important;
}
.status .percent {
    margin-left: 7px;
}

/* windows taskbar */
.taskbar {
    display: flex;
    flex: none;
    height: 28px;
    background-color: #060b14;
    color: #fff;
}
.start {
    width: 34px;
    justify-content: center;
}
.search {
    display: flex;
    align-items: center;
    gap: 7px;
    width: 245px;
    padding: 0 11px 0 6px;
    background-color: #f2f2f2;
}
.search input {
    flex: 1;
    min-width: 0;
    font-size: 10px;
    line-height: 16px;
}
.search input::placeholder {
    color: #444;
    opacity: 1;
}
.apps {
    display: flex;
}
.apps button {
    width: 35px;
    padding-top: 2px;
    justify-content: center;
}
.apps svg {
    width: 18px;
    height: 18px;
    margin-bottom: 2px;
}
.apps .running {
    background: linear-gradient(#6ca7dc, #6ca7dc) bottom / 28px 2px no-repeat;
}
.apps .current {
    background-color: #3a3f48;
    background-size: 100% 2px;
}
.tray {
    display: flex;
    align-items: center;
    gap: 5px;
    margin-left: auto;
    padding-right: 2px;
}
.people {
    margin-right: 9px;
}
.clock {
    text-align: center;
    line-height: 13px;
    padding-bottom: 1px;
}
.notify {
    position: relative;
    height: 100%;
    padding: 0 14px 0 4px;
    border-right: 1px solid #444;
}
.badge {
    position: absolute;
    left: 10px;
    top: 13px;
    width: 11px;
    height: 11px;
    border: 1px solid #aaa;
    border-radius: 50%;
    background-color: #222;
    line-height: 9px;
    text-align: center;
}
```

FILE: shapes.js
```js
// outline of a star (or a regular polygon when both radii are equal)
function star(n, outer, inner, cx = 7, cy = 7) {
    const pts = [];
    for (let i = 0; i < n * 2; i++) {
        const r = i % 2 ? inner : outer;
        const a = Math.PI * i / n - Math.PI / 2;
        pts.push((cx + r * Math.cos(a)).toFixed(2) + ' ' + (cy + r * Math.sin(a)).toFixed(2));
    }
    return 'M' + pts.join('L') + 'z';
}
function circle(r, cx = 7, cy = 7) {
    return `M${cx - r} ${cy}a${r} ${r} 0 1 0 ${2 * r} 0a${r} ${r} 0 1 0 ${-2 * r} 0z`;
}
// shape with a number or letter in it
function lettered(d, text, x = 7, y = 9) {
    return { d, text, x, y };
}

const s = {
    textbox: lettered('M1.5 3h11v8h-11zM7.500 5h4M7.500 7h4M3 9.200h8.500', 'A', 4.7, 7.700),
    line: 'M2 3l10 8',
    arrow: 'M2 3l9.500 8M11.500 8v3h-3.500',
    dblArrow: 'M2 3l9.500 8M11.500 8.500v2.500h-3M2 5.500V3h3',
    rect: 'M1.500 3h11v8h-11z',
    ellipse: 'M1.500 7a5.500 4 0 1 0 11 0a5.500 4 0 1 0-11 0z',
    round: 'M3.500 3h7q2 0 2 2v4q0 2-2 2h-7q-2 0-2-2V5q0-2 2-2z',
    triangle: 'M7 2.500l4.500 9h-9z',
    elbow: 'M1.500 3h5v8h6',
    elbowArrow: 'M1.500 3h5v7.500h6M10.500 8.500l2 2-2 2',
    elbowDbl: 'M1.500 4h5v6.500h6M10.500 8.500l2 2-2 2M3.500 2l-2 2 2 2',
    right: 'M1.500 5H7V2l5.500 5L7 12V9H1.500z',
    left: 'M12.500 5H7V2L1.500 7 7 12V9h5.500z',
    up: 'M5 12.500h4V7h3L7 1.500 2 7h3z',
    down: 'M5 1.500h4V7h3l-5 5.500L2 7h3z',
    freeform: 'M1.500 11V6.500L4 3h5.500v1Q7 5 8.500 7H12v4z',
    scribble: 'M4 4q2-3 4-1.500T5 6.500q-2 1.500 0 1.500t3-2 2.500 0T8 9t0 2 2-1M5 8q2 1 1 3',
    arc: 'M1.500 3.500q9 0 11 8',
    curve: 'M1.500 11C5 11 3.500 3 6.500 3s2.500 8 6 8',
    curl: 'M5 3h2.500q2 0 1 2.500L6 8q-1 3 2.500 3',
    curlArrow: 'M3 3h3.500q2 0 1 2L6 8q-1 2.500 5 2.500M9 8.500l2 2-2 2',
    curlDbl: 'M2 4h4.500q2 0 1 2L6 8q-1 2.500 6 2.500M10 8.500l2 2-2 2M4 2L2 4l2 2',
    braceL: 'M8.500 2.500Q7 2.500 7 4v1.500Q7 7 5.500 7 7 7 7 8.500V10q0 1.500 1.500 1.500',
    braceR: 'M5.500 2.500Q7 2.500 7 4v1.500Q7 7 8.500 7 7 7 7 8.500V10q0 1.500-1.500 1.500',
    bracketL: 'M9 2.500q-3 0-3 2v5q0 2 3 2',
    bracketR: 'M5 2.500q3 0 3 2v5q0 2-3 2',
    star5: star(5, 5.5, 2.3, 7, 7.5),
    snip1: 'M1.500 3H10l2.500 2.500V11h-11z',
    snip2: 'M4 3h6l2.500 3v5h-11V6z',
    snipDiag: 'M1.500 3H9l3.500 3.500V11H5L1.500 7.500z',
    round1: 'M1.500 3H10q2.500 0 2.500 2.500V11h-11z',
    snipRound: 'M4 3h6l2.500 3v5h-11V6q0-3 2.500-3z',
    roundTop: 'M3.500 3h7q2 0 2 2v6h-11V5q0-2 2-2z',
    roundDiag: 'M4 3h8.500v6q0 2-2.500 2H1.500V5q0-2 2.500-2z',
    rightTri: 'M2.500 2.500v9h9z',
    para: 'M4.500 3h8l-3 8h-8z',
    trapezoid: 'M4.500 2.500h5l2.500 9H2z',
    diamond: 'M7 2l5 5-5 5-5-5z',
    pentagon: 'M7 2l5.500 4-2 6h-7l-2-6z',
    hexagon: 'M4 3h6l2.500 4L10 11H4L1.500 7z',
    pie: 'M7 2a5 5 0 1 0 5 5H7z',
    chord: 'M4 2.500q-3 2-2 5t5 4.500q3 0 5-3.500z',
    teardrop: 'M12 2v5.500q-1 4.500-5 4.500t-5-5q.5-4.500 5-5z',
    frame: 'M2 2h10v10H2zM4 4h6v6H4z',
    halfFrame: 'M2 12V2h10l-2 2H4v6z',
    lShape: 'M2.500 2.500H6V8h5.500v3.500h-9z',
    stripe: 'M1.500 12V9L9 2h3.500z',
    cross: 'M5 2h4v3h3v4H9v3H5V9H2V5h3z',
    plaque: 'M4 2h6q0 2 2.500 2.500v5Q10 10 10 12H4q0-2-2.500-2.500v-5Q4 4 4 2z',
    can: 'M3.500 3.500q0-1.500 3.500-1.500t3.500 1.500v7q0 1.500-3.500 1.500t-3.500-1.500zM3.500 3.500Q3.500 5 7 5t3.500-1.500',
    cube: 'M2 5l3-3h7v7l-3 3H2zM2 5h7v7M9 5l3-3',
    bevel: 'M1.500 1.500h11v11h-11zM4 4h6v6H4zM1.500 1.500L4 4M12.500 1.500L10 4M1.500 12.500L4 10M12.500 12.500L10 10',
    donut: circle(5.300) + circle(2.700),
    noSign: circle(5.300) + circle(3) + 'M4 5.500l5 5M5 4l5 5',
    blockArc: 'M1.500 9.500q0-6 5.500-6t5.500 6H9.500Q9.500 6 7 6T4.500 9.500z',
    fold: 'M2 2h10v7l-3 3H2zM9 12V9h3',
    smiley: circle(5.300) + 'M4 8.500q3 3 6 0M5 4.500v1.500M9 4.500v1.500',
    heart: 'M7 12Q1 7.500 1.500 4.500 2 2 4.500 2 6.500 2.500 7 4.500 7.500 2 10 2q2.500.5 2.500 3T7 12z',
    bolt: 'M2 3.500L5.500 2l3 3-1 .5L10 8l-1 .5 3 4L6 9l1-.5L4 6.500l1-1z',
    sun: circle(2.300) + 'M7 1.500v2M7 10.500v2M1.500 7h2M10.500 7h2M3 3l1.500 1.500M11 3L9.500 4.500M3 11l1.500-1.500M11 11L9.500 9.500',
    moon: 'M10 1.500Q3.500 2 3.500 7t6.500 5.500Q6.500 11 6.500 7T10 1.500z',
    cloud: 'M3.500 10.500q-2.500 0-2-2Q.5 6 3 5.500q.5-2 3-1.500 1.500-1.500 3 0 3-.5 2.500 2 1.500 2-.5 3-.5 2-3 1-2 1.500-4.500.5z',
    brackets: 'M4 2.500q-2.500 0-2.500 2v5q0 2 2.500 2M10 2.500q2.500 0 2.500 2v5q0 2-2.500 2',
    braces: 'M5 2.500q-2 0-2 2T1.500 7Q3 7 3 9.500t2 2M9 2.500q2 0 2 2T12.500 7Q11 7 11 9.500t-2 2',
    leftRight: 'M1.500 7L5 2.500V5h4V2.500L12.500 7 9 11.500V9H5v2.500z',
    upDown: 'M7 1.500L11.500 5H9v4h2.500L7 12.500 2.500 9H5V5H2.500z',
    quad: 'M7 1.500l2 2H8V6h2.500V5l2 2-2 2V8H8v2.500h1l-2 2-2-2h1V8H3.500v1l-2-2 2-2v1H6V3.500H5z',
    triArrow: 'M7 1.500l2.500 2.500H8v4h2.500V6.500L13 9.500l-2.500 2.500v-1.500h-7V12L1 9.500l2.500-3V8H6V4H4.500z',
    bent: 'M2 12V7q0-3 3-3h4V2l3.500 3.500L9 9V7H6Q5 7 5 8.500V12z',
    uTurn: 'M2 12V6q0-4 4-4t4.500 4v1h2L9 11 5.500 7H8V6q0-1.500-2-1.500T4.500 6v6z',
    leftUp: 'M12.500 5L10 1.500 7.500 5H9v3H5V6.500L1.500 9.500l3.500 3V11h6.500V5z',
    bentUp: 'M12.500 5L9.500 1.500 6.500 5h2v3.500h-7V11h9.500V5z',
    curvedR: 'M10 2Q3 2 3 6t5 5v1.500L11.500 9.500 8 7v1.500Q5 8.500 4.500 6 6 4 10 4z',
    curvedL: 'M4 2q7 0 7 4t-5 5v1.500L2.500 9.500 6 7v1.500q3 0 3.500-2.500Q8 4 4 4z',
    curvedU: 'M2 4q0 7 4 7t5-4.500h1.500L10 3 7 6.500h1.500q0 3-2.500 3Q4 8 4 4z',
    curvedD: 'M2 10.500q0-7 4-7t5 4.500h1.500L10 11.500 7 8h1.500q0-3-2.500-3Q4 6.500 4 10.500z',
    striped: 'M1.500 5v4M3 5v4M4.500 5H8V2.500l4.500 4.500L8 11.500V9H4.500z',
    notched: 'M2 5h5.500V2.500L12.500 7l-5 4.500V9H2l1.500-2z',
    home: 'M2 3.500h6.500L12.500 7l-4 3.500H2z',
    chevron: 'M3 3.500h4.500L11 7l-3.500 3.500H3L6.500 7z',
    calloutR: 'M2 2h6v3.500h2V4l3 3-3 3V8.500H8V12H2z',
    calloutD: 'M2 2h10v6H8.500v2H10l-3 3-3-3h1.500V8H2z',
    calloutL: 'M12 2H6v3.500H4V4L1 7l3 3V8.500h2V12h6z',
    calloutU: 'M2 12h10V6H8.500V4H10L7 1 4 4h1.500v2H2z',
    calloutLR: 'M4.500 2h5v4H11V4.500L13 7l-2 2.500V8H9.500v4h-5V8H3v1.500L1 7l2-2.500V6h1.500z',
    calloutQuad: 'M7 1l2.500 2.500H8.500V5H10v1h1V4.500L13 7l-2 2.500V8h-1v1.500H8.500V11h1L7 13l-2.500-2h1V9.500H4V8H3v1.500L1 7l2-2.500V6h1V5h1.500V3.500h-1z',
    plus: 'M5.500 2h3v3.500H12v3H8.500V12h-3V8.500H2v-3h3.500z',
    minus: 'M2 6h10v2H2z',
    times: 'M4.500 2.500L7 5l2.500-2.500 2 2L9 7l2.500 2.500-2 2L7 9l-2.500 2.500-2-2L5 7 2.500 4.500z',
    divide: 'M2 6.300h10v1.400H2zM6.300 2.500h1.400v1.400H6.300zM6.300 10h1.400v1.400H6.300z',
    equal: 'M2 3.500h10V6H2zM2 8h10v2.500H2z',
    notEqual: 'M2 3.500h10V6H2zM2 8h10v2.500H2zM4 12l4.500-10h2L6 12z',
    decision: 'M1.500 7L7 4l5.500 3L7 10z',
    predefined: 'M2 2.500h10v9H2zM4 2.500v9M10 2.500v9',
    internal: 'M2 2.500h10v9H2zM4 2.500v9M2 4.500h10',
    docShape: 'M1.500 2.500h11v6L7 11.500 1.500 8.500z',
    multiDoc: 'M1.500 6h8v5h-8zM1.500 6l3-3h8l-3 3M12.500 3v5l-3 3M3 4.500h8v5',
    terminator: 'M4 5h6q2 0 2 2t-2 2H4Q2 9 2 7t2-2z',
    manualIn: 'M1.500 5.500l11-2.500v8h-11z',
    manualOp: 'M2 3h10l-2 8.500H4z',
    connector: circle(3),
    offpage: 'M3.500 3.500h7v5L7 11 3.500 8.500z',
    card: 'M4.500 3h8v8h-11V6z',
    tape: 'M1.500 3q3 2 5.500.5t5.500 0V11Q10 9.500 7 11t-5.500 0z',
    junction: circle(5.200) + 'M3.500 3.500l7 7M10.500 3.500l-7 7',
    or: circle(5.200) + 'M7 1.800v10.400M1.800 7h10.400',
    collate: 'M4 2h6l-6 10h6z',
    sort: 'M7 2l3 5-3 5-3-5zM4 7h6',
    merge: 'M2.500 2.500h9l-4.500 9z',
    stored: 'M4 3h8.500q-2 4 0 8H4Q1.500 10.500 1.500 7T4 3z',
    delay: 'M2 3h5q5 .5 5 4t-5 4H2z',
    seq: circle(5) + 'M7 12h5.500',
    disk: 'M1.500 5Q1.500 3 7 3t5.500 2v4q0 2-5.500 2t-5.500-2zM1.500 5q0 2 5.500 2t5.500-2',
    direct: 'M4.500 2.500h5Q12 3 12 7t-2.500 4.500h-5Q2 11 2 7t2.500-4.500zM9.500 2.500Q7.500 4 7.500 7t2 4.500',
    display: 'M4.500 2h5l3 5-3 5h-5l-3-5z',
    ribbonUp: 'M1.500 5.500h2V3.500h7v2h2L11 8l1.500 2.500H8.500V9h-3v1.500h-4L3 8zM3.500 5.500V9h7V5.500',
    ribbonDown: 'M1.500 3.500h4V5h3V3.500h4L11 6l1.500 2.500h-2v2h-7v-2h-2L3 6zM3.500 8.500V5M10.500 8.500V5',
    scroll: 'M3 3h9v2h-2v6H2V9h1z',
    wave: 'M1.500 4q3-2 5.500 0t5.500 0v7q-3 1.500-5.500 0t-5.500 0z',
    callRect: 'M1.500 2.500h11v7.500H6l-2 2.500V10H1.500z',
    callRound: 'M3.500 2.500h7q2 0 2 2V8q0 2-2 2H6l-2 2.500V10q-2.500 0-2.500-2V4.500q0-2 2-2z',
    callOval: 'M4 10Q1.500 9 1.500 6.500q0-4 5.500-4t5.500 4T6.500 10.500l-3 2z',
    callLine: 'M5.500 4h7v5.500h-7zM1 11l4-5.500',
    callLine2: 'M5.500 4h7v5.500h-7zM1 11l2-5.500h2.500',
    callLine3: 'M5.500 3h7v6h-7zM6 12H2V5h3.500',
    ghost: 'M6 4h1.500M9 4h1M12 4v1M12 7v2M6 9h1M9 9h1M1 11l4-6.500V9',
    ghost2: 'M6 4h1.500M9 4h1M12 4v1M12 7v2M6 9h1M9 9h1M1 11l2-5.500h2',
    ghost3: 'M6 3h1.500M9 3h1M12 3v1M12 6v2M8 9h1M11 9h1M6 12H2V5h3.500'
};
const badge = n => lettered(circle(5.300), n);
const seal = n => lettered(star(n, 5.800, 4.500), n);

const sections = [
    ['Recently Used Shapes', [s.textbox, s.line, s.arrow, s.rect, s.ellipse, s.round, s.triangle, s.elbow, s.elbowArrow, s.right, s.down, s.freeform,
        s.scribble, s.arc, s.curve, s.braceL, s.braceR, s.star5]],
    ['Lines', [s.line, s.arrow, s.dblArrow, s.elbow, s.elbowArrow, s.elbowDbl, s.curl, s.curlArrow, s.curlDbl, s.curve, s.freeform, s.scribble]],
    ['Rectangles', [s.rect, s.round, s.snip1, s.snip2, s.snipDiag, s.snipRound, s.round1, s.roundTop, s.roundDiag]],
    ['Basic Shapes', [s.textbox, s.ellipse, s.triangle, s.rightTri, s.para, s.trapezoid, s.diamond, s.pentagon, s.hexagon, badge(7), badge(8), badge(10),
        badge(12), s.pie, s.chord, s.teardrop, s.frame, s.halfFrame, s.lShape, s.stripe, s.cross, s.plaque, s.can, s.cube,
        s.bevel, s.donut, s.noSign, s.blockArc, s.fold, s.smiley, s.heart, s.bolt, s.sun, s.moon, s.cloud, s.arc,
        s.brackets, s.braces, s.bracketL, s.bracketR, s.braceL, s.braceR]],
    ['Block Arrows', [s.right, s.left, s.up, s.down, s.leftRight, s.upDown, s.quad, s.triArrow, s.bent, s.uTurn, s.leftUp, s.bentUp,
        s.curvedR, s.curvedL, s.curvedU, s.curvedD, s.striped, s.notched, s.home, s.chevron, s.calloutR, s.calloutD, s.calloutL, s.calloutU,
        s.calloutLR, s.calloutQuad, s.uTurn]],
    ['Equation Shapes', [s.plus, s.minus, s.times, s.divide, s.equal, s.notEqual]],
    ['Flowchart', [s.rect, s.round, s.decision, s.para, s.predefined, s.internal, s.docShape, s.multiDoc, s.terminator, s.hexagon, s.manualIn, s.manualOp,
        s.connector, s.offpage, s.card, s.tape, s.junction, s.or, s.collate, s.sort, s.triangle, s.merge, s.stored, s.delay,
        s.seq, s.disk, s.direct, s.display]],
    ['Stars and Banners', [star(8, 5.500, 3), star(7, 5.500, 3.500), star(4, 5.500, 2), s.star5, star(6, 5.500, 3.500), star(7, 5.500, 4), seal(8), seal(10), seal(12), seal(16), seal(24), seal(32),
        s.ribbonUp, s.ribbonDown, s.ribbonUp, s.ribbonDown, s.scroll, s.scroll, s.wave, s.tape]],
    ['Callouts', [s.callRect, s.callRound, s.callOval, s.cloud + 'M4 11l-1 2', s.callLine, s.callLine2, s.callLine3, s.ghost, s.ghost2, s.ghost3, s.ghost, s.ghost2,
        s.ghost3, s.callLine, s.callLine2, s.callLine3]]
];

document.getElementById('gallery').innerHTML = sections.map(([name, shapes]) => {
    const cells = shapes.map((shape, i) => {
        const hot = name === 'Stars and Banners' && i === 3;
        const text = shape.text ? `<text x="${shape.x}" y="${shape.y}">${shape.text}</text>` : '';
        const tip = hot ? '<span class="tooltip">Star: 5 Points</span>' : '';
        return `<button class="shape${hot ? ' hot' : ''}"><svg viewBox="0 0 14 14"><path d="${shape.d || shape}"/>${text}</svg>${tip}</button>`;
    });
    return `<h4>${name}</h4><div class="shapes">${cells.join('')}</div>`;
}).join('');

// ruler marks, one cell for each eighth of an inch
function ruler(id, from, to) {
    let html = '';
    for (let k = from; k <= to; k++) {
        if (k % 8 === 0 && k !== 0) {
            html += `<div class="tick number"><span>${Math.abs(k / 8)}</span></div>`;
        } else {
            html += `<div class="tick${k % 4 === 0 && k !== 0 ? ' half' : ''}"></div>`;
        }
    }
    document.getElementById(id).innerHTML = html;
}
ruler('hruler', -7, 59);
ruler('vruler', -8, 58);
```
